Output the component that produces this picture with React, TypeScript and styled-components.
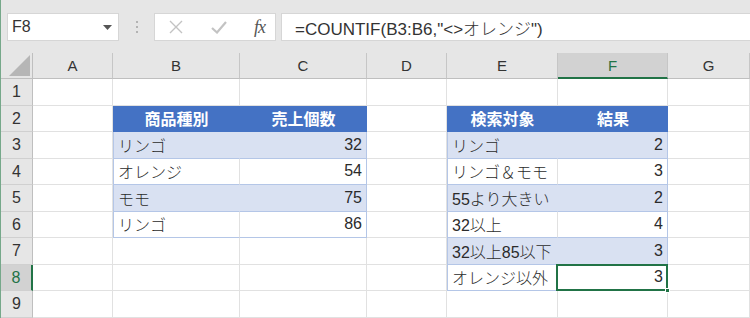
import * as React from 'react'
import styled, { createGlobalStyle, css } from 'styled-components'

const GlobalStyle = createGlobalStyle`
  html, body {
    margin: 0;
    padding: 0;
    background: #e6e6e6;
  }
  body {
    font-family: "Liberation Sans", "Noto Sans CJK JP", sans-serif;
  }
`

const FONT = `"Liberation Sans", "Noto Sans CJK JP", sans-serif`
const GREEN = '#217346'
const GRID = '#e1e1e1'
const TABLE_LINE = '#b4c6e7'

type Kind = 'head' | 'band' | 'plain'
type Align = 'left' | 'right' | 'center'

interface CellData {
  text: string
  kind: Kind
  align: Align
  tableLeft?: boolean
  tableRight?: boolean
  selected?: boolean
}

const COLS = ['A', 'B', 'C', 'D', 'E', 'F', 'G']
const COL_WIDTHS = [80, 127, 127, 80, 111, 110, 82]
const ROW_HEIGHTS = [27, 26, 27, 26, 27, 26, 27, 26, 27]
const ACTIVE_COL = 'F'
const ACTIVE_ROW = 8

const Window = styled.div`
  width: 749px;
  height: 318px;
  overflow: hidden;
  border-left: 1px solid #76a88a;
  display: flex;
  flex-direction: column;
`

const FormulaBar = styled.div`
  height: 53px;
  box-sizing: border-box;
  padding: 13px 0 12px 6px;
  display: flex;
  align-items: stretch;
  background: #e6e6e6;
`

const NameBox = styled.div`
  width: 112px;
  box-sizing: border-box;
  background: #fff;
  border: 1px solid #d6d6d6;
  display: flex;
  align-items: center;
  justify-content: space-between;
  padding: 0 6px 0 4px;
  font: 300 16px ${FONT};
  color: #333;
`

const Dots = styled.div`
  width: 35px;
  display: flex;
  flex-direction: column;
  align-items: center;
  justify-content: center;
  gap: 3px;

  span {
    width: 2px;
    height: 2px;
    background: #b3b3b3;
  }
`

const ButtonBox = styled.div`
  width: 122px;
  box-sizing: border-box;
  background: #fff;
  border: 1px solid #d6d6d6;
  display: flex;
  align-items: center;
  justify-content: space-between;
  padding: 0 10px 0 14px;
`

const FxLabel = styled.span`
  font: italic 18px "Liberation Serif", serif;
  color: #555;
  letter-spacing: -1px;
`

const FormulaInput = styled.div`
  flex: 1;
  margin-left: 5px;
  box-sizing: border-box;
  background: #fff;
  border: 1px solid #d6d6d6;
  border-right: none;
  display: flex;
  align-items: center;
  padding-left: 13px;
  font: 300 17px ${FONT};
  color: #333;
  white-space: nowrap;
`

const Sheet = styled.div`
  display: grid;
  grid-template-columns: 32px ${COL_WIDTHS.map(w => `${w}px`).join(' ')};
  grid-template-rows: 26px ${ROW_HEIGHTS.map(h => `${h}px`).join(' ')};
  background: #fff;
`

const Corner = styled.div`
  background: #e6e6e6;
  border-right: 1px solid #bfbfbf;
  border-bottom: 1px solid #bfbfbf;
  box-sizing: border-box;
  display: flex;
  align-items: flex-end;
  justify-content: flex-end;
  padding: 0 2px 2px 0;
`

const ColHead = styled.div<{ $active?: boolean }>`
  box-sizing: border-box;
  background: ${p => (p.$active ? '#d2d2d2' : '#e6e6e6')};
  color: ${p => (p.$active ? GREEN : '#333')};
  border-right: 1px solid #c6c6c6;
  border-bottom: ${p => (p.$active ? `2px solid ${GREEN}` : '1px solid #bfbfbf')};
  display: flex;
  align-items: center;
  justify-content: center;
  font: 15px ${FONT};
`

const RowHead = styled.div<{ $active?: boolean }>`
  box-sizing: border-box;
  background: ${p => (p.$active ? '#d2d2d2' : '#e6e6e6')};
  color: ${p => (p.$active ? GREEN : '#333')};
  border-right: ${p => (p.$active ? `2px solid ${GREEN}` : '1px solid #bfbfbf')};
  border-bottom: 1px solid #d0d0d0;
  display: flex;
  align-items: center;
  justify-content: center;
  font: 16px ${FONT};
`

const kindStyles = {
  head: css`
    background: #4472c4;
    color: #fff;
    font-weight: bold;
    border-right-color: #4472c4;
    border-bottom-color: #4472c4;
  `,
  band: css`
    background: #d9e1f2;
    border-right-color: #d9e1f2;
    border-bottom-color: ${TABLE_LINE};
  `,
  plain: css`
    background: #fff;
    border-bottom-color: ${TABLE_LINE};
  `,
}

const Cell = styled.div<{
  $kind?: Kind
  $align: Align
  $tableLeft?: boolean
  $tableRight?: boolean
  $selected?: boolean
}>`
  position: relative;
  box-sizing: border-box;
  border-right: 1px solid ${GRID};
  border-bottom: 1px solid ${GRID};
  display: flex;
  align-items: center;
  justify-content: ${p =>
    p.$align === 'right' ? 'flex-end' : p.$align === 'center' ? 'center' : 'flex-start'};
  padding: 0 4px 1px 5px;
  font: 300 16px ${FONT};
  color: #2b2b2b;
  white-space: nowrap;
  ${p => p.$kind && kindStyles[p.$kind]}
  ${p => p.$tableRight && p.$kind !== 'head' && css`border-right-color: ${TABLE_LINE};`}
  ${p => p.$tableLeft && p.$kind !== 'head' && css`box-shadow: inset 1px 0 ${TABLE_LINE};`}
  ${p =>
    p.$selected &&
    css`
      &::after {
        content: '';
        position: absolute;
        left: -2px;
        top: -1px;
        right: -1px;
        bottom: -1px;
        border: 2px solid ${GREEN};
        pointer-events: none;
      }
      &::before {
        content: '';
        position: absolute;
        right: -3px;
        bottom: -3px;
        width: 5px;
        height: 5px;
        background: ${GREEN};
        border: 1px solid #fff;
        box-sizing: border-box;
        z-index: 2;
      }
    `}
`

const left: [string, string][] = [
  ['リンゴ', '32'],
  ['オレンジ', '54'],
  ['モモ', '75'],
  ['リンゴ', '86'],
]

const right: [string, string][] = [
  ['リンゴ', '2'],
  ['リンゴ＆モモ', '3'],
  ['55より大きい', '2'],
  ['32以上', '4'],
  ['32以上85以下', '3'],
  ['オレンジ以外', '3'],
]

const buildCells = () => {
  const cells: Record<string, CellData> = {}
  const put = (addr: string, data: CellData) => {
    cells[addr] = data
  }
  put('B2', { text: '商品種別', kind: 'head', align: 'center' })
  put('C2', { text: '売上個数', kind: 'head', align: 'center' })
  left.forEach(([name, count], i) => {
    const row = i + 3
    const kind: Kind = i % 2 === 0 ? 'band' : 'plain'
    put(`B${row}`, { text: name, kind, align: 'left', tableLeft: true })
    put(`C${row}`, { text: count, kind, align: 'right', tableRight: true })
  })
  put('E2', { text: '検索対象', kind: 'head', align: 'center' })
  put('F2', { text: '結果', kind: 'head', align: 'center' })
  right.forEach(([name, count], i) => {
    const row = i + 3
    const kind: Kind = i % 2 === 0 ? 'band' : 'plain'
    put(`E${row}`, { text: name, kind, align: 'left', tableLeft: true })
    put(`F${row}`, { text: count, kind, align: 'right', tableRight: true })
  })
  cells[`${ACTIVE_COL}${ACTIVE_ROW}`].selected = true
  return cells
}

const CornerMark = () => (
  <svg width="21" height="21" viewBox="0 0 21 21">
    <polygon points="21,0 21,21 0,21" fill="#b6b6b6" />
  </svg>
)

const DropArrow = () => (
  <svg width="9" height="5" viewBox="0 0 9 5">
    <polygon points="0,0 9,0 4.5,5" fill="#555" />
  </svg>
)

const CancelIcon = () => (
  <svg width="14" height="14" viewBox="0 0 14 14">
    <path d="M1 1 L13 13 M13 1 L1 13" stroke="#c3c3c3" strokeWidth="1.4" fill="none" />
  </svg>
)

const EnterIcon = () => (
  <svg width="16" height="13" viewBox="0 0 16 13">
    <path d="M1 7 L6 11.5 L15 1" stroke="#c3c3c3" strokeWidth="2.2" fill="none" />
  </svg>
)

export default function App() {
  const cells = buildCells()

  return (
    <>
      <GlobalStyle />
      <Window>
        <FormulaBar>
          <NameBox>
            <span>F8</span>
            <DropArrow />
          </NameBox>
          <Dots>
            <span />
            <span />
            <span />
          </Dots>
          <ButtonBox>
            <CancelIcon />
            <EnterIcon />
            <FxLabel>fx</FxLabel>
          </ButtonBox>
          <FormulaInput>=COUNTIF(B3:B6,"&lt;&gt;オレンジ")</FormulaInput>
        </FormulaBar>

        <Sheet>
          <Corner>
            <CornerMark />
          </Corner>
          {COLS.map(c => (
            <ColHead key={c} $active={c === ACTIVE_COL}>
              {c}
            </ColHead>
          ))}
          {ROW_HEIGHTS.map((_, i) => {
            const row = i + 1
            return (
              <React.Fragment key={row}>
                <RowHead $active={row === ACTIVE_ROW}>{row}</RowHead>
                {COLS.map(c => {
                  const data = cells[`${c}${row}`]
                  return (
                    <Cell
                      key={c}
                      $kind={data?.kind}
                      $align={data?.align ?? 'left'}
                      $tableLeft={data?.tableLeft}
                      $tableRight={data?.tableRight}
                      $selected={data?.selected}
                    >
                      {data?.text}
                    </Cell>
                  )
                })}
              </React.Fragment>
            )
          })}
        </Sheet>
      </Window>
    </>
  )
}
